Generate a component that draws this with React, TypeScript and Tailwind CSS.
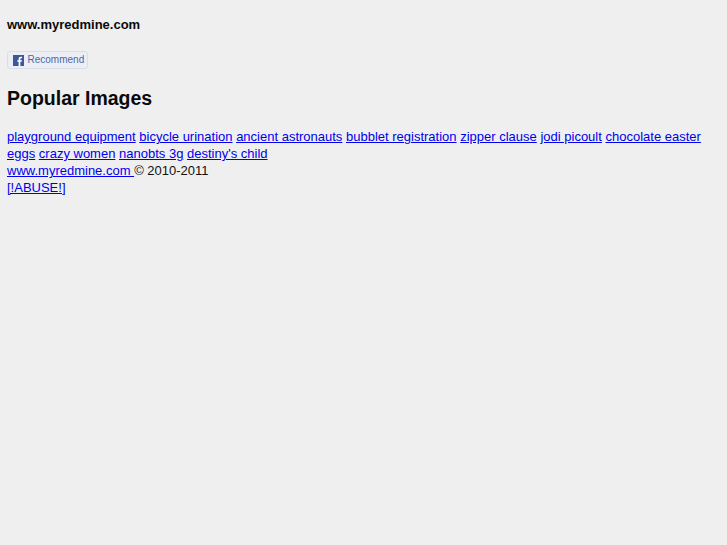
export default function App() {
  const links = ["playground equipment","bicycle urination","ancient astronauts","bubblet registration","zipper clause","jodi picoult","chocolate easter eggs","crazy women","nanobts 3g","destiny's child"];
  return (
    <div className="min-h-[545px] bg-[#efefef] pl-[7px] pr-[7px] pt-[16px] text-[13px] leading-[17px] text-black [font-family:'Liberation_Sans',Arial,sans-serif]">
      <h1 className="text-[13px] leading-[17px] font-bold text-[#0a0a0a]">www.myredmine.com</h1>
      <div className="mt-[18px] flex h-[18px] w-[81px] items-center rounded-[3px] border border-[#d8dfea] bg-[#eceef5] pl-[5px]">
        <svg width="11" height="11" viewBox="0 0 12 12" className="shrink-0">
          <rect width="12" height="12" fill="#3b5998" />
          <path d="M8 12V7.400h1.500l.3-1.800H8V4.500c0-.6.2-.9.9-.9h1V2H8.500C6.900 2 6.100 3 6.100 4.300v1.300H4.700v1.800h1.400V12z" fill="#fff" />
        </svg>
        <span className="ml-[3.5px] text-[10px] leading-[14px] text-[#4f67a3]">Recommend</span>
      </div>
      <h2 className="mt-[17px] text-[19.5px] leading-[24px] font-bold text-[#0a0a0a]">Popular Images</h2>
      <p className="mt-[18px] w-[712px]">
        {links.map((l) => (
          <span key={l}><a href="#" className="text-[#0000ee] underline">{l}</a>{" "}</span>
        ))}
        <br />
        <a href="#" className="text-[#0000ee] underline">www.myredmine.com </a>
        <span className="text-[#111]">© 2010-2011</span>
        <br />
        <a href="#" className="text-[#0000ee] underline">[!ABUSE!]</a>
      </p>
    </div>
  );
}
